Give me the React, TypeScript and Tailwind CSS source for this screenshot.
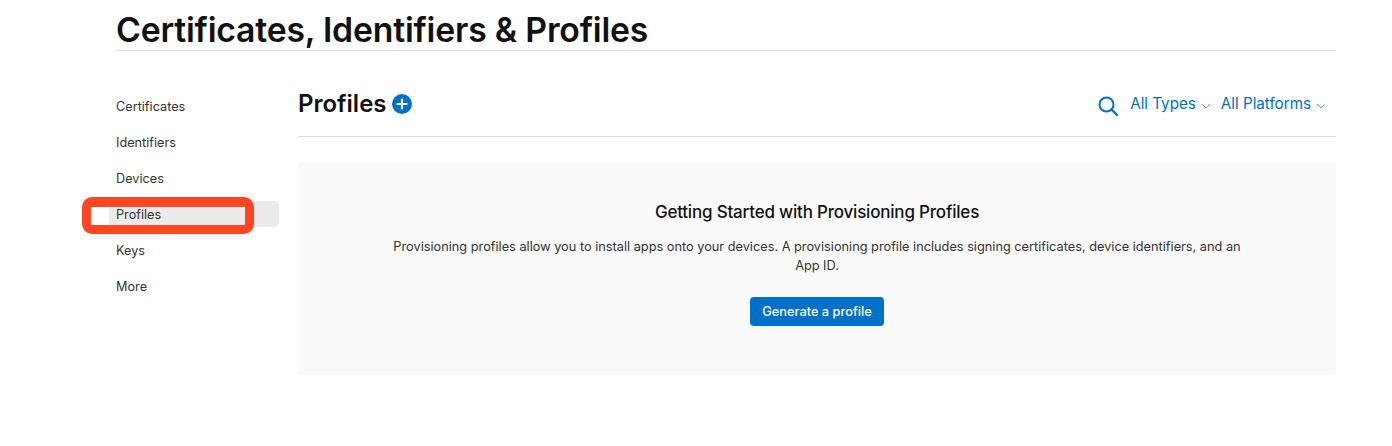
import React from 'react';

const navItems = ['Certificates', 'Identifiers', 'Devices', 'Profiles', 'Keys', 'More'];

function FilterLink({ label }: { label: string }) {
  return (
    <span className="flex items-center gap-[5px] text-[15.2px] leading-[20px] text-[#0070c9]">
      {label}
      <svg width="10" height="6" viewBox="0 0 10 6" fill="none" className="mt-[3px] opacity-60">
        <path d="M1 1l4 4 4-4" stroke="#0070c9" strokeWidth="1" />
      </svg>
    </span>
  );
}

export default function App() {
  return (
    <div className="relative w-[1392px] h-[446px] bg-white overflow-hidden pl-[116px] pr-[56px] font-['Inter',sans-serif] text-[#111111]">
      {/* page title */}
      <div className="h-[51px] border-b border-[#dddddd]">
        <h1 className="text-[33.75px] leading-[40px] pt-[10px] font-semibold tracking-[-0.2px] whitespace-nowrap">
          Certificates, Identifiers &amp; Profiles
        </h1>
      </div>

      <div className="flex mt-[37px]">
        {/* sidebar */}
        <nav className="w-[189px] shrink-0 -ml-[7px] mt-[5px] flex flex-col gap-[10px]">
          {navItems.map((item) => (
            <div
              key={item}
              className={
                'w-[170px] h-[26px] pl-[7px] pt-[2px] rounded-[5px] flex items-center text-[12.7px] text-[#333333] ' +
                (item === 'Profiles' ? 'bg-[#ebebeb]' : '')
              }
            >
              {item}
            </div>
          ))}
        </nav>

        <main className="flex-1">
          <div className="h-[49px] flex items-start justify-between border-b border-[#dddddd]">
            <div className="flex items-center gap-[5px] h-[32px]">
              <h2 className="text-[24px] leading-[32px] font-semibold">Profiles</h2>
              <svg width="20" height="20" viewBox="0 0 20 20">
                <circle cx="10" cy="10" r="10" fill="#0070c9" />
                <path d="M10 5.5v9M5.5 10h9" stroke="#fff" strokeWidth="2.2" strokeLinecap="round" />
              </svg>
            </div>
            <div className="flex items-center h-[32px] pr-[10px]">
              <svg width="22" height="22" viewBox="0 0 22 22" fill="none" className="mr-[11px] mt-[3px]">
                <circle cx="9.5" cy="9.5" r="7" stroke="#0070c9" strokeWidth="2" />
                <path d="M14.5 14.5L20 20" stroke="#0070c9" strokeWidth="2.4" strokeLinecap="round" />
              </svg>
              <FilterLink label="All Types" />
              <div className="w-[10px]" />
              <FilterLink label="All Platforms" />
            </div>
          </div>

          {/* empty state */}
          <section className="mt-[25px] h-[213px] rounded-[4px] bg-[#fafafa] flex flex-col items-center pt-[38px]">
            <h3 className="text-[17px] leading-[24px] font-medium tracking-[-0.2px]">
              Getting Started with Provisioning Profiles
            </h3>
            <p className="mt-[13px] w-[860px] text-center text-[12.75px] leading-[19px] text-[#333333]">
              Provisioning profiles allow you to install apps onto your devices. A provisioning profile includes signing certificates, device identifiers, and an App ID.
            </p>
            <button className="mt-[22px] h-[29px] w-[134px] rounded-[4px] bg-[#0070c9] text-white text-[12.8px] font-medium">
              Generate a profile
            </button>
          </section>
        </main>
      </div>

      {/* red annotation over the Profiles row */}
      <div className="absolute left-[82px] top-[197px] w-[172px] h-[37px] rounded-[10px] border-[9px] border-t-[10px] border-[#ff4521]" />
    </div>
  );
}
